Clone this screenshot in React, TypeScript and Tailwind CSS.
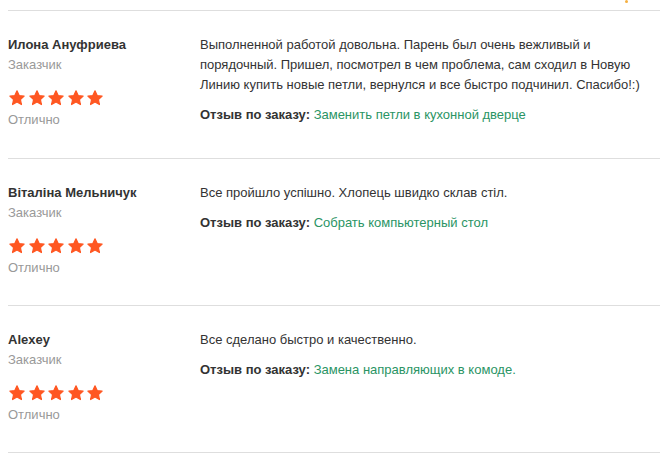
import React from 'react';

interface Review {
  name: string;
  lines: string[];
  order: string;
}

const reviews: Review[] = [
  {
    name: 'Илона Ануфриева',
    lines: [
      'Выполненной работой довольна. Парень был очень вежливый и',
      'порядочный. Пришел, посмотрел в чем проблема, сам сходил в Новую',
      'Линию купить новые петли, вернулся и все быстро подчинил. Спасибо!:)',
    ],
    order: 'Заменить петли в кухонной дверце',
  },
  {
    name: 'Віталіна Мельничук',
    lines: ['Все пройшло успішно. Хлопець швидко склав стіл.'],
    order: 'Собрать компьютерный стол',
  },
  {
    name: 'Alexey',
    lines: ['Все сделано быстро и качественно.'],
    order: 'Замена направляющих в комоде.',
  },
];

// fat five-point star with rounded tips
const Star = () => (
  <svg viewBox="0 0 24 24" className="w-[18px] h-[18px]" fill="#ff5722" stroke="#ff5722" strokeWidth="1.6" strokeLinejoin="round">
    <path d="M12 2.5l2.9 6.2 6.6.8-4.9 4.6 1.3 6.6L12 17.4l-5.9 3.3 1.3-6.6-4.9-4.6 6.6-.8z" />
  </svg>
);

const ReviewRow: React.FC<{ review: Review }> = ({ review }) => (
  <div className="flex border-t border-[#dedede] pt-6 pb-[27px]">
    <div className="w-[192px] shrink-0">
      <div className="font-bold text-[#333] leading-5">{review.name}</div>
      <div className="text-[#999] leading-5">Заказчик</div>
      <div className="flex gap-[1.5px] mt-[14px] mb-[3px]">
        {[0, 1, 2, 3, 4].map((i) => (
          <Star key={i} />
        ))}
      </div>
      <div className="text-[#999] leading-5">Отлично</div>
    </div>
    <div className="flex-1 text-[#333] leading-5">
      <p>
        {review.lines.map((line, i) => (
          <React.Fragment key={i}>
            {i > 0 && <br />}
            {line}
          </React.Fragment>
        ))}
      </p>
      <p className="mt-[10px]">
        <span className="font-bold">Отзыв по заказу:</span>{' '}
        <span className="text-[#2a9464]">{review.order}</span>
      </p>
    </div>
  </div>
);

export default function App() {
  return (
    <div className="relative w-[672px] h-[470px] bg-white pt-[10px] pl-2 pr-3 text-[13px]" style={{ fontFamily: '"Liberation Sans", Arial, sans-serif' }}>
      <div className="absolute left-[625px] top-0 w-[3px] h-[3px] rounded-full bg-[#f5b041]" />
      {reviews.map((r, i) => (
        <div key={r.name} className={i === 0 ? 'pb-px' : ''}>
          <ReviewRow review={r} />
        </div>
      ))}
      <div className="border-t border-[#dedede]" />
    </div>
  );
}
